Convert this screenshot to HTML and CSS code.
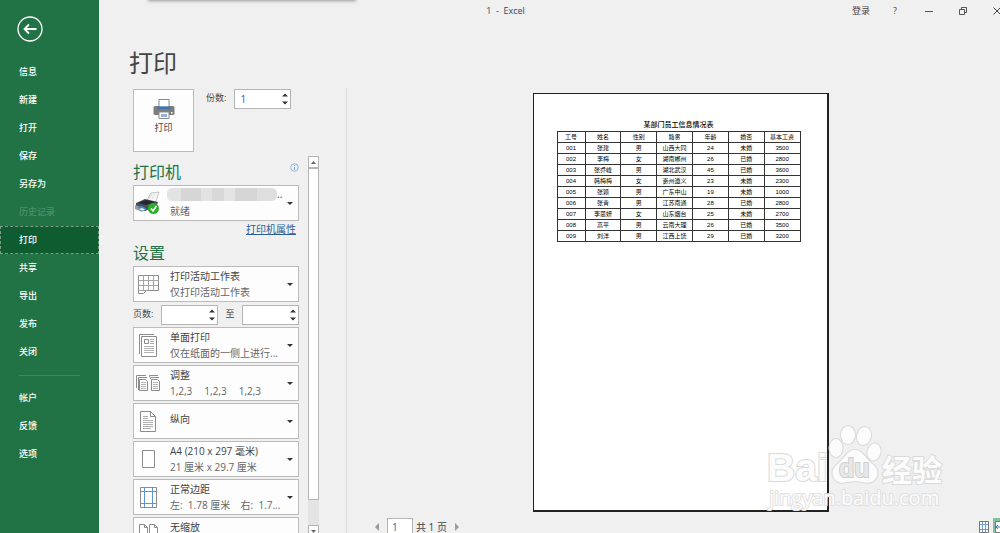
FILE: index.html
```html
<!DOCTYPE html>
<html lang="zh-CN">
<head>
    <meta charset="UTF-8">
    <meta name="viewport" content="width=device-width, initial-scale=1.0">
    <title>1 - Excel</title>
    <link rel="stylesheet" href="styles.css">
</head>
<body>
    <div class="app">
        <aside class="sidebar">
            <button type="button" class="back" aria-label="返回">
                <svg width="28" height="28" viewBox="0 0 28 28" fill="none" stroke="#fff">
                    <circle cx="14" cy="14" r="12" stroke-width="1.3"/>
                    <path d="M20.5 14H9M13 9.500L8.500 14l4.500 4.500" stroke-width="1.800"/>
                </svg>
            </button>
            <nav class="menu">
                <a href="#">信息</a>
                <a href="#">新建</a>
                <a href="#">打开</a>
                <a href="#">保存</a>
                <a href="#">另存为</a>
                <a href="#" class="disabled" aria-disabled="true">历史记录</a>
                <a href="#" class="active">打印</a>
                <a href="#">共享</a>
                <a href="#">导出</a>
                <a href="#">发布</a>
                <a href="#">关闭</a>
                <hr>
                <a href="#">帐户</a>
                <a href="#">反馈</a>
                <a href="#">选项</a>
            </nav>
        </aside>

        <main class="main">
            <header class="titlebar">
                <div class="drag-tab"></div>
                <span class="title">1&nbsp; -&nbsp; Excel</span>
                <div class="window-buttons">
                    <button type="button">登录</button>
                    <button type="button">?</button>
                    <button type="button" aria-label="最小化">
                        <svg width="10" height="10" viewBox="0 0 10 10" fill="none" stroke="#555"><path d="M1 5.500h8"/></svg>
                    </button>
                    <button type="button" aria-label="还原">
                        <svg width="10" height="10" viewBox="0 0 10 10" fill="none" stroke="#555"><path d="M1.500 3.500h5v5h-5zM3.500 3.500v-2h5v5h-2"/></svg>
                    </button>
                    <button type="button" aria-label="关闭">
                        <svg width="10" height="10" viewBox="0 0 10 10" fill="none" stroke="#444"><path d="M1.500 1.500l7 7M8.500 1.500l-7 7"/></svg>
                    </button>
                </div>
            </header>

            <h1>打印</h1>

            <div class="content">
                <section class="settings">
                    <div class="print-row">
                        <button type="button" class="print-button">
                            <svg width="22" height="20" viewBox="0 0 22 20">
                                <path d="M1.500 7h19l1 1.500V15l-1 1h-19l-1-1V8.500z" fill="#7d7d7d"/>
                                <path d="M6 .5h10V8H6z" fill="#fff" stroke="#8a8a8a"/>
                                <path d="M4.500 7.500h13V10h-13z" fill="#3c74b4"/>
                                <path d="M6 13h10v6.500H6z" fill="#fff" stroke="#8a8a8a"/>
                                <path d="M8 15h6v3H8z" fill="#8fb4e0"/>
                                <path d="M18 13h1.500v1.500H18z" fill="#fff"/>
                            </svg>
                            打印
                        </button>
                        <label for="copies">份数:</label>
                        <div class="spinner">
                            <input type="number" id="copies" value="1" min="1">
                            <svg class="arrows" width="6" height="12" viewBox="0 0 6 12"><path d="M0 3.500L3 .5l3 3zM0 8.500l3 3 3-3z"/></svg>
                        </div>
                    </div>

                    <div class="scroll-area">
                        <div class="options">
                            <div class="section-head">
                                <h2>打印机</h2>
                                <svg width="9" height="9" viewBox="0 0 9 9" fill="none" stroke="#7aa7dc"><circle cx="4.500" cy="4.500" r="3.800" stroke-width=".8"/><path d="M4.500 2v1M4.500 4v3"/></svg>
                            </div>
                            <div class="picker">
                                <select aria-label="打印机"><option></option></select>
                                <svg class="icon" width="28" height="24" viewBox="0 0 28 24">
                                    <path d="M13 9l4-7 8-1-4 12z" fill="#f7f7f7" stroke="#aaa" stroke-width=".7"/>
                                    <path d="M15 8l3-5M18 8l3-5.500" stroke="#ddd"/>
                                    <path d="M2 12l9-4 13 3-2 5-11 4-9-4z" fill="#4c4f55"/>
                                    <path d="M4 12l8-3 9 2-9 3z" fill="#23262b"/>
                                    <path d="M1 14l8 3-1 4-7-3z" fill="#9a9da3"/>
                                    <path d="M3 16l5-1 5 3-4 2z" fill="#3f86c8"/>
                                    <path d="M5 18l3-1 3 1.500-2 1z" fill="#e8f2fa"/>
                                    <circle cx="19.500" cy="17.500" r="5.500" fill="#2fae2b"/>
                                    <path d="M17 17.500l2 2.500 3.500-5" fill="none" stroke="#fff" stroke-width="1.600"/>
                                </svg>
                                <span class="masked"><i></i>..</span>
                                <span class="detail">就绪</span>
                            </div>
                            <a href="#" class="link">打印机属性</a>

                            <h2>设置</h2>
                            <div class="picker">
                                <select aria-label="打印范围"><option>打印活动工作表</option></select>
                                <svg class="icon" width="28" height="24" viewBox="0 0 28 24" fill="none" stroke="#8c8c8c">
                                    <path d="M4.500 3.500h20v15h-12l-3 3h-5z" fill="#fff"/>
                                    <path d="M4.500 8.500h20M4.500 13.500h20M9.500 3.500v15M14.500 3.500v15M19.500 3.500v15M4.500 18.500h8" stroke="#a5a5a5"/>
                                </svg>
                                <span class="detail">仅打印活动工作表</span>
                            </div>
                            <div class="pages">
                                <label for="from">页数:</label>
                                <div class="spinner">
                                    <input type="number" id="from" min="1">
                                    <svg class="arrows" width="6" height="12" viewBox="0 0 6 12"><path d="M0 3.500L3 .5l3 3zM0 8.500l3 3 3-3z"/></svg>
                                </div>
                                <label for="to">至</label>
                                <div class="spinner">
                                    <input type="number" id="to" min="1">
                                    <svg class="arrows" width="6" height="12" viewBox="0 0 6 12"><path d="M0 3.500L3 .5l3 3zM0 8.500l3 3 3-3z"/></svg>
                                </div>
                            </div>
                            <div class="picker">
                                <select aria-label="单双面"><option>单面打印</option></select>
                                <svg class="icon" width="28" height="24" viewBox="0 0 28 24" fill="none" stroke="#8c8c8c">
                                    <path d="M5.500 21V1.500H20"/>
                                    <path d="M7.500 3.500h15v20h-15z" fill="#fff"/>
                                    <path d="M10.500 6.500h4v4h-4z"/>
                                    <path d="M16 6.500h4M16 8.500h4M16 10.500h4M10 13.500h10M10 15.500h10M10 17.500h10M10 19.500h10" stroke="#b0b0b0"/>
                                </svg>
                                <span class="detail">仅在纸面的一侧上进行...</span>
                            </div>
                            <div class="picker">
                                <select aria-label="调整"><option>调整</option></select>
                                <svg class="icon" width="28" height="24" viewBox="0 0 28 24" fill="none" stroke="#8c8c8c">
                                    <path d="M2.500 17V4.500H12M4.500 19V6.500H13M15.500 6V4.500H24M16.500 8V6.500H25"/>
                                    <path d="M5.500 8.500h6l2 2v9h-8zM17.500 8.500h6l2 2v9h-8z" fill="#fff"/>
                                    <path d="M7 11.500h5M7 13.500h5M7 15.500h5M7 17.500h5M19 11.500h5M19 13.500h5M19 15.500h5M19 17.500h5" stroke="#b5b5b5"/>
                                </svg>
                                <span class="detail sets"><span>1,2,3</span><span>1,2,3</span><span>1,2,3</span></span>
                            </div>
                            <div class="picker single">
                                <select aria-label="方向"><option>纵向</option></select>
                                <svg class="icon" width="28" height="24" viewBox="0 0 28 24" fill="none" stroke="#8c8c8c">
                                    <path d="M6.500 2.500h10l5 5v15h-15z" fill="#fff"/>
                                    <path d="M16.500 2.500v5h5"/>
                                    <path d="M9 7.500h5M9 9.500h5M9 11.500h10M9 13.500h10M9 15.500h10M9 17.500h10M9 19.500h8" stroke="#b0b0b0"/>
                                </svg>
                            </div>
                            <div class="picker">
                                <select aria-label="纸张大小"><option>A4 (210 x 297 毫米)</option></select>
                                <svg class="icon" width="28" height="24" viewBox="0 0 28 24" fill="none" stroke="#8c8c8c">
                                    <path d="M8.500 3.500h12v17h-12z" fill="#fff"/>
                                </svg>
                                <span class="detail">21 厘米 x 29.7 厘米</span>
                            </div>
                            <div class="picker">
                                <select aria-label="页边距"><option>正常边距</option></select>
                                <svg class="icon" width="28" height="24" viewBox="0 0 28 24" fill="none" stroke="#8c8c8c">
                                    <path d="M6.500 2.500h16v20h-16z" fill="#fff"/>
                                    <path d="M10.500 2v21M18.500 2v21M6 6.500h17M6 18.500h17" stroke="#5b93d3"/>
                                </svg>
                                <span class="detail">左:&nbsp; 1.78 厘米&nbsp; &nbsp; 右:&nbsp; 1.7...</span>
                            </div>
                            <div class="picker">
                                <select aria-label="缩放"><option>无缩放</option></select>
                                <svg class="icon" width="28" height="24" viewBox="0 0 28 24" fill="none" stroke="#8c8c8c">
                                    <path d="M5.500 1.500h5l3 3v13h-8zM15.500 1.500h5l3 3v13h-8z" fill="#fff"/>
                                    <path d="M10.500 1.500v3h3M20.500 1.500v3h3"/>
                                </svg>
                            </div>
                        </div>
                        <div class="scrollbar">
                            <button type="button" aria-label="向上"><svg width="5" height="3" viewBox="0 0 5 3"><path d="M0 3L2.500 0 5 3z" fill="#666"/></svg></button>
                            <div class="thumb"></div>
                            <button type="button" aria-label="向下"><svg width="5" height="3" viewBox="0 0 5 3"><path d="M0 0l2.500 3L5 0z" fill="#666"/></svg></button>
                        </div>
                    </div>
                </section>

                <section class="preview">
                    <div class="paper">
                        <table>
                            <caption>某部门员工信息情况表</caption>
                            <thead>
                                <tr><th class="id">工号</th><th>姓名</th><th>性别</th><th>籍贯</th><th>年龄</th><th>婚否</th><th>基本工资</th></tr>
                            </thead>
                            <tbody>
                                <tr><td>001</td><td>张建</td><td>男</td><td>山西大同</td><td>24</td><td>未婚</td><td>3500</td></tr>
                                <tr><td>002</td><td>李梅</td><td>女</td><td>湖南郴州</td><td>26</td><td>已婚</td><td>2800</td></tr>
                                <tr><td>003</td><td>张乔峰</td><td>男</td><td>湖北武汉</td><td>45</td><td>已婚</td><td>3600</td></tr>
                                <tr><td>004</td><td>韩梅梅</td><td>女</td><td>贵州遵义</td><td>23</td><td>未婚</td><td>2300</td></tr>
                                <tr><td>005</td><td>张颖</td><td>男</td><td>广东中山</td><td>19</td><td>未婚</td><td>1000</td></tr>
                                <tr><td>006</td><td>张青</td><td>男</td><td>江苏南通</td><td>28</td><td>已婚</td><td>2800</td></tr>
                                <tr><td>007</td><td>李思妍</td><td>女</td><td>山东烟台</td><td>25</td><td>未婚</td><td>2700</td></tr>
                                <tr><td>008</td><td>高平</td><td>男</td><td>云南大理</td><td>26</td><td>已婚</td><td>3500</td></tr>
                                <tr><td>009</td><td>刘洋</td><td>男</td><td>江西上饶</td><td>29</td><td>已婚</td><td>3200</td></tr>
                            </tbody>
                        </table>
                    </div>
                    <footer class="pager">
                        <button type="button" aria-label="上一页"><svg width="4" height="8" viewBox="0 0 4 8"><path d="M4 0v8L0 4z" fill="#999"/></svg></button>
                        <input type="text" value="1" aria-label="当前页">
                        <span>共 1 页</span>
                        <button type="button" aria-label="下一页"><svg width="4" height="8" viewBox="0 0 4 8"><path d="M0 0v8l4-4z" fill="#999"/></svg></button>
                        <div class="view-buttons">
                            <button type="button" aria-label="显示边距">
                                <svg width="10" height="12" viewBox="0 0 10 12" fill="none" stroke="#777"><path d="M.5.5h9v11h-9z" fill="#fff"/><path d="M3.500 1v10M6.500 1v10M1 3.500h8M1 8.500h8" stroke="#6f9fd8"/></svg>
                            </button>
                            <button type="button" class="on" aria-label="缩放到页面">
                                <svg width="10" height="12" viewBox="0 0 10 12" fill="none" stroke="#777"><path d="M.5.5h9v11h-9z" fill="#fff"/><path d="M1 6h8M3 4L1 6l2 2" stroke="#3c74b4"/></svg>
                            </button>
                        </div>
                    </footer>
                </section>
            </div>
        </main>

        <svg class="watermark" width="180" height="90" viewBox="0 0 180 90">
            <g class="logo">
                <text x="0" y="56" font-size="39">Bai</text>
                <ellipse cx="69" cy="23" rx="6.500" ry="9"/>
                <ellipse cx="81" cy="10" rx="7" ry="9"/>
                <ellipse cx="97" cy="11" rx="7" ry="9" transform="rotate(12 97 11)"/>
                <ellipse cx="107" cy="27" rx="6.500" ry="8.500" transform="rotate(15 107 27)"/>
                <path d="M88 25c7 0 10 7 15 12 5 4 9 8 7 14s-8 8-14 6c-5-1-11-1-16 0-6 2-12 0-14-6s2-10 7-14c5-5 8-12 15-12z"/>
                <text x="72" y="52" font-size="25" class="du">du</text>
                <text x="115" y="56" font-size="30">经验</text>
            </g>
            <text class="url" x="2" y="80" font-size="20">jingyan.baidu.com</text>
        </svg>
    </div>
</body>
</html>
```
FILE: styles.css
```css
* {
    box-sizing: border-box;
}
body {
    margin: 0;
    background: #f0f0f0;
    color: #444;
    font-family: "Open Sans", "Noto Sans CJK SC", sans-serif;
    font-size: 10px;
    line-height: 16px;
}
button, input, select {
    font: inherit;
    color: inherit;
    border: none;
    background: none;
    padding: 0;
    margin: 0;
}
h1, h2 {
    margin: 0;
    font-weight: normal;
}
.app {
    position: relative;
    display: flex;
    height: 100vh;
    overflow: hidden;
}

/* left menu */
.sidebar {
    flex: none;
    width: 99px;
    background: #217346;
    color: #fff;
    font-size: 9px;
}
.back {
    display: block;
    height: 28px;
    margin: 15px 0 15px 16px;
}
.menu a {
    display: block;
    height: 28px;
    padding-left: 19px;
    line-height: 28px;
    color: #fff;
    font-weight: 500;
    text-decoration: none;
}
.menu a.disabled {
    color: #4d9068;
}
.menu a.active {
    background: #0e5c2f;
    outline: 1px dashed #7d9c86;
    outline-offset: -1px;
}
.menu hr {
    margin: 9px 19px 8px;
    border: none;
    border-top: 1px solid #3c8a5c;
}

/* window title */
.main {
    flex: 1;
    display: flex;
    flex-direction: column;
    min-width: 0;
    overflow: hidden;
}
.titlebar {
    position: relative;
    display: flex;
    flex: none;
    height: 22px;
    line-height: 22px;
    font-size: 9px;
}
.drag-tab {
    position: absolute;
    left: 50px;
    top: -10px;
    width: 206px;
    height: 10px;
    box-shadow: 0 0 3px 1px #999;
}
.title {
    flex: 1;
    padding-left: 68px;
    text-align: center;
}
.window-buttons {
    display: flex;
    margin-right: -14px;
}
.window-buttons button {
    display: flex;
    align-items: center;
    justify-content: center;
    width: 34px;
}
h1 {
    flex: none;
    padding: 24px 0 0 30px;
    font-size: 24px;
    line-height: 34px;
    height: 66px;
}

.content {
    flex: 1;
    display: flex;
    min-height: 0;
}
.settings {
    flex: none;
    display: flex;
    flex-direction: column;
    width: 248px;
    padding: 1px 0 0 34px;
    border-right: 1px solid #dcdcdc;
}
.print-row {
    display: flex;
    flex: none;
    font-size: 9px;
    line-height: 18px;
    margin-bottom: 4px;
}
.print-button {
    display: flex;
    flex-direction: column;
    align-items: center;
    width: 61px;
    height: 63px;
    padding-top: 9px;
    margin-right: 12px;
    border: 1px solid #bbb;
    background: #fdfdfd;
}
.print-row .spinner {
    margin-left: 8px;
}
.spinner {
    position: relative;
    width: 57px;
    height: 20px;
}
.spinner input {
    width: 100%;
    height: 100%;
    padding-left: 5px;
    border: 1px solid #b5b5b5;
    background: #fff;
    color: #3d5a96;
    font-size: 10px;
    appearance: textfield;
}
.spinner input::-webkit-inner-spin-button {
    display: none;
}
.arrows {
    position: absolute;
    right: 3px;
    top: 4px;
    fill: #333;
}

/* options list */
.scroll-area {
    flex: 1;
    display: flex;
    gap: 9px;
    min-height: 0;
    overflow: hidden;
}
.options {
    width: 166px;
    padding-top: 5px;
}
.section-head {
    display: flex;
    justify-content: space-between;
    padding-top: 2px;
}
h2 {
    margin-bottom: 3px;
    color: #217346;
    font-size: 16px;
    line-height: 19px;
}
.picker {
    display: grid;
    grid-template-columns: 28px 1fr 20px;
    column-gap: 8px;
    height: 36px;
    margin-bottom: 2px;
    border: 1px solid #bbb;
    background: #fdfdfd;
}
.picker::after {
    content: "";
    grid-area: 1 / 3;
    align-self: center;
    justify-self: end;
    margin-right: 5px;
    border: 3px solid transparent;
    border-top-color: #333;
    border-bottom: none;
    pointer-events: none;
}
.picker select {
    grid-area: 1 / 1 / 2 / 4;
    height: 34px;
    padding: 0 20px 16px 36px;
    appearance: none;
}
.picker.single select {
    padding-top: 6px;
    padding-bottom: 10px;
}
.picker .icon {
    grid-area: 1 / 1;
    align-self: center;
    pointer-events: none;
}
.detail {
    grid-area: 1 / 2 / 2 / 4;
    align-self: end;
    margin-bottom: 1px;
    color: #666;
    white-space: nowrap;
    pointer-events: none;
}
.sets {
    display: flex;
    gap: 12px;
}
.masked {
    grid-area: 1 / 1 / 2 / 4;
    display: flex;
    height: 14px;
    padding-left: 33px;
    pointer-events: none;
}
.masked i {
    width: 110px;
    height: 13px;
    margin-top: 2px;
    border-radius: 5px;
    background: linear-gradient(90deg, #e3e3e3 0 14px, #d6d6d6 14px 34px, #e2e2e2 34px 45px, #d8d8d8 45px 57px, #e4e4e4 57px 68px, #d5d5d5 68px 90px, #dedede 90px);
}
.link {
    display: block;
    margin: -2px 3px 7px;
    color: #2a6099;
    text-align: right;
}
.pages {
    display: flex;
    justify-content: space-between;
    margin: 3px 0 2px;
    line-height: 18px;
    font-size: 9px;
}
.scrollbar {
    display: flex;
    flex-direction: column;
    width: 11px;
    background: #e4e4e4;
}
.scrollbar button {
    display: flex;
    flex: none;
    align-items: center;
    justify-content: center;
    height: 12px;
    border: 1px solid #b5b5b5;
    background: #fff;
}
.scrollbar button:last-child {
    margin-bottom: -4px;
}
.thumb {
    height: 88%;
    margin-bottom: auto;
    border: 1px solid #b5b5b5;
    background: #fff;
}

/* page preview */
.preview {
    flex: 1;
    display: flex;
    flex-direction: column;
    min-width: 0;
}
.paper {
    flex: none;
    align-self: center;
    width: 296px;
    aspect-ratio: 210 / 297;
    margin: 5px 0 6px 14px;
    padding: 25px 23px;
    border: 1px solid #222;
    border-width: 1px 2px 2px 1px;
    background: #fff;
}
.paper table {
    width: 244px;
    border-collapse: collapse;
    table-layout: fixed;
    color: #000;
    font-family: "Liberation Sans", "Noto Sans CJK SC", sans-serif;
    font-size: 6px;
    line-height: 10px;
    text-align: center;
}
.paper caption {
    font-size: 7px;
    line-height: 12px;
    font-weight: 500;
}
.paper th, .paper td {
    height: 11px;
    padding: 0;
    border: 1px solid #333;
    font-weight: normal;
}
.paper .id {
    width: 28px;
}
.pager {
    display: flex;
    flex: none;
    align-items: center;
    height: 19px;
    padding-left: 28px;
    font-size: 10px;
}
.pager button {
    display: flex;
}
.pager input {
    width: 26px;
    height: 19px;
    margin: 0 3px 0 8px;
    padding-left: 4px;
    border: 1px solid #b5b5b5;
    background: #fff;
    color: #3d5a96;
}
.pager span {
    margin-right: 8px;
}
.view-buttons {
    display: flex;
    gap: 4px;
    margin-left: auto;
    margin-right: -7px;
}
.view-buttons .on {
    padding: 3px 2px;
    background: #86bf9f;
}
.view-buttons button {
    align-items: center;
}

.watermark {
    position: absolute;
    right: 53px;
    bottom: 18px;
    overflow: visible;
    pointer-events: none;
}
.watermark text, .watermark ellipse, .watermark path {
    fill: #fcfcfc;
    stroke: #dadada;
    stroke-width: 2px;
    paint-order: stroke;
}
.watermark text {
    font-family: "Liberation Sans", "Noto Sans CJK SC", sans-serif;
    font-weight: bold;
}
.watermark .du {
    fill: #e8e8e8;
    stroke: #cfcfcf;
}
.watermark .url {
    font-family: "Open Sans", sans-serif;
    font-weight: normal;
    stroke: #e0e0e0;
}
```
